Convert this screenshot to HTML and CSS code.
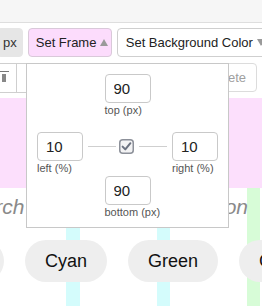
FILE: index.html
```html
<!DOCTYPE html>
<html>
<head>
<meta charset="utf-8">
<link rel="stylesheet" href="styles.css">
</head>
<body>
<div class="topbar"></div>
<div class="toolbar">
  <button class="btn btn-px">px</button>
  <button class="btn btn-frame">Set Frame<span class="tri tri-up"></span></button>
  <button class="btn btn-bg">Set Background Color<span class="tri tri-down"></span></button>
</div>
<div class="row2">
  <div class="tool-a"><span class="tool-line"></span><span class="tool-cursor"></span></div>
  <div class="tool-b"></div>
  <div class="spacer"></div>
  <button class="btn btn-delete">Delete</button>
</div>
<div class="pink"></div>
<div class="stage">
  <div class="titles"><span class="t-left">Search</span><span class="t-right">Button</span></div>
  <div class="pills">
    <span class="pill pill-first">Pink</span>
    <span class="pill">Cyan</span>
    <span class="pill">Green</span>
    <span class="pill">Grey</span>
  </div>
</div>
<div class="popup">
  <div class="field field-center">
    <input class="num" type="text" value="90">
    <span class="lbl">top (px)</span>
  </div>
  <div class="mid">
    <div class="field">
      <input class="num" type="text" value="10">
      <span class="lbl">left (%)</span>
    </div>
    <div class="link-area">
      <span class="link-line link-line-l"></span>
      <svg class="check" width="15" height="15" viewBox="0 0 15 15">
        <rect x="0.75" y="0.75" width="13.5" height="13.5" rx="3" ry="3" fill="#f3f3f4" stroke="#8c9099" stroke-width="1.5"/>
        <path d="M3.6 7.6 L6.3 10.4 L11.4 4.2" fill="none" stroke="#6b7280" stroke-width="2" stroke-linecap="round" stroke-linejoin="round"/>
      </svg>
      <span class="link-line link-line-r"></span>
    </div>
    <div class="field">
      <input class="num" type="text" value="10">
      <span class="lbl">right (%)</span>
    </div>
  </div>
  <div class="field field-center field-bottom">
    <input class="num" type="text" value="90">
    <span class="lbl">bottom (px)</span>
  </div>
</div>
</body>
</html>
```

FILE: styles.css
```css
* { box-sizing: border-box; }
html, body { margin: 0; padding: 0; }
body {
  width: 262px;
  height: 306px;
  overflow: hidden;
  position: relative;
  background: #fff;
  font-family: "Liberation Sans", Arial, sans-serif;
  color: #222;
}
.topbar {
  height: 23px;
  background: #f6f6f6;
  border-bottom: 1px solid #dedede;
}
.toolbar {
  display: flex;
  gap: 5px;
  margin-top: 5px;
  height: 29px;
  white-space: nowrap;
}
.btn {
  font-family: "Liberation Sans", Arial, sans-serif;
  font-size: 13px;
  color: #222;
  height: 29px;
  border: 1px solid #cfcfcf;
  border-radius: 4px;
  background: #fff;
  padding: 0 7px;
  display: flex;
  align-items: center;
  flex-shrink: 0;
  margin: 0;
}
.btn-px {
  margin-left: -3px;
  background: #e6e6e6;
  border-color: #e6e6e6;
  padding: 0 5px;
  color: #333;
}
.btn-frame {
  width: 84px;
  background: #fcdcfc;
  border-color: #d9c9d9;
  padding-left: 7px;
}
.btn-bg {
  padding-left: 8px;
}
.tri {
  display: inline-block;
  width: 0;
  height: 0;
  margin-left: 4px;
  border-left: 4px solid transparent;
  border-right: 4px solid transparent;
}
.tri-up { border-bottom: 7px solid #9a9a9a; }
.tri-down { border-top: 7px solid #9a9a9a; }
.row2 {
  display: flex;
  margin-top: 6px;
  height: 30px;
}
.tool-a {
  width: 17px;
  height: 30px;
  border: 1px solid #cfcfcf;
  border-left: none;
  position: relative;
}
.tool-line {
  display: block;
  width: 9px;
  height: 1px;
  background: #777;
  margin-top: 7px;
}
.tool-cursor {
  display: block;
  width: 4px;
  height: 8px;
  background: #888;
  margin-top: 2px;
  margin-left: 2px;
}
.tool-b {
  width: 10px;
  height: 30px;
  border: 1px solid #cfcfcf;
  border-left: none;
}
.spacer { flex: 1; }
.btn-delete {
  margin-right: 5px;
  color: #a0a0a0;
  border-color: #dcdcdc;
  padding: 0 10px;
}
.pink {
  margin-top: 5px;
  height: 90px;
  background: #fcdffc;
}
.stage {
  height: 118px;
  background: linear-gradient(to right,
    transparent 66px, #d4fcfc 66px, #d4fcfc 80px,
    transparent 80px, transparent 157px, #d4fcfc 157px, #d4fcfc 170px,
    transparent 170px, transparent 247px, #d7fcd7 247px, #d7fcd7 260px,
    transparent 260px);
  overflow: hidden;
}
.titles {
  display: flex;
  justify-content: space-between;
  padding-top: 7px;
  height: 30px;
  font-style: italic;
  font-size: 21px;
  line-height: 24px;
  color: #8a8a8a;
  white-space: nowrap;
}
.t-left { margin-left: -42px; }
.t-right { margin-right: 14px; }
.pills {
  display: flex;
  gap: 21px;
  margin-top: 22px;
  margin-left: -71px;
  white-space: nowrap;
}
.pill {
  flex-shrink: 0;
  height: 42px;
  padding: 0 20px;
  border-radius: 21px;
  background: #eeeeee;
  font-size: 18px;
  color: #111;
  display: flex;
  align-items: center;
}
.popup {
  position: absolute;
  left: 26px;
  top: 63px;
  width: 203px;
  height: 165px;
  background: #fff;
  border: 1px solid #c8c8c8;
  padding: 10px 10px 0 10px;
}
.field {
  display: flex;
  flex-direction: column;
  width: 46px;
}
.field-center { margin: 0 auto; }
.field-bottom { margin-top: 1px; }
.num {
  width: 46px;
  height: 29px;
  border: 1px solid #c9c9c9;
  border-radius: 4px;
  padding: 0 0 0 8px;
  margin: 0;
  font-family: "Liberation Sans", Arial, sans-serif;
  font-size: 15px;
  color: #222;
  background: #fff;
  outline: none;
}
.lbl {
  font-size: 11px;
  line-height: 14px;
  color: #555;
  white-space: nowrap;
}
.mid {
  display: flex;
  align-items: flex-start;
  margin-top: 15px;
}
.link-area {
  flex: 1;
  height: 29px;
  display: flex;
  align-items: center;
  padding: 0 5px;
  gap: 3px;
}
.link-line {
  flex: 1;
  height: 1px;
  background: #cfcfcf;
}
.link-line-l { margin-right: 0; }
.link-line-r { margin-left: 2px; }
.check { display: block; flex-shrink: 0; }
```
